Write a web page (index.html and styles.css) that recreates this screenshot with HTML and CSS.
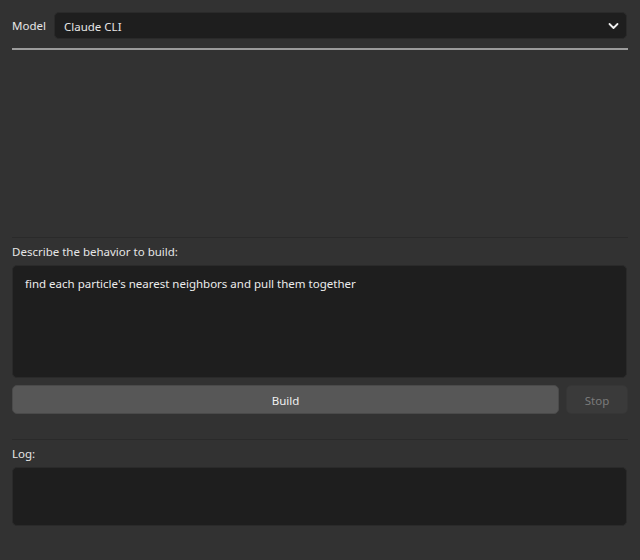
FILE: index.html
```html
<!DOCTYPE html>
<html>
<head>
<meta charset="utf-8">
<link rel="stylesheet" href="styles.css">
</head>
<body>
<div class="app">
  <div class="model-row">
    <span class="label model-label">Model</span>
    <div class="combo">
      <span class="combo-text">Claude CLI</span>
      <svg class="chev" width="11" height="8" viewBox="0 0 11 8"><path d="M1.5 2 L5.5 6 L9.5 2" fill="none" stroke="#f0f0f0" stroke-width="1.8" stroke-linecap="round" stroke-linejoin="round"/></svg>
    </div>
  </div>
  <div class="rule-strong"></div>
  <div class="preview"></div>
  <div class="section">
    <div class="label">Describe the behavior to build:</div>
    <div class="textbox prompt">find each particle's nearest neighbors and pull them together</div>
    <div class="buttons">
      <div class="btn build">Build</div>
      <div class="btn stop">Stop</div>
    </div>
  </div>
  <div class="section log-section">
    <div class="label">Log:</div>
    <div class="textbox log"></div>
  </div>
</div>
</body>
</html>
```
FILE: styles.css
```css
html, body {
  margin: 0;
  padding: 0;
  background: #323232;
  height: 100%;
}
body {
  font-family: "Noto Sans", "Open Sans", sans-serif;
  font-size: 11.5px;
  color: #e6e6e6;
}
.app {
  padding: 12px 12px 0 12px;
  display: flex;
  flex-direction: column;
}
.model-row {
  display: flex;
  align-items: center;
  gap: 8px;
  height: 27px;
}
.label {
  line-height: 16px;
  color: #e6e6e6;
}
.model-label {
  width: 34px;
}
.combo {
  flex: 1;
  height: 27px;
  box-sizing: border-box;
  background: #1e1e1e;
  border: 1px solid #2a2a2a;
  border-radius: 5px;
  display: flex;
  align-items: center;
  justify-content: space-between;
  padding: 1px 7px 0 9px;
  margin-right: 1px;
}
.chev {
  display: block;
}
.rule-strong {
  height: 2px;
  background: #9c9c9c;
  margin-top: 9px;
}
.preview {
  height: 187px;
}
.section {
  border-top: 1px solid #2a2a2a;
  padding-top: 6px;
  display: flex;
  flex-direction: column;
}
.section .label {
  height: 16px;
  margin-bottom: 5px;
}
.textbox {
  background: #1e1e1e;
  border: 1px solid #2a2a2a;
  border-radius: 5px;
  box-sizing: border-box;
  margin-right: 1px;
}
.prompt {
  height: 113px;
  padding: 10px 12px 9px;
  line-height: 16px;
  color: #ececec;
}
.buttons {
  display: flex;
  gap: 7px;
  margin-top: 7px;
  height: 29px;
}
.btn {
  border-radius: 5px;
  box-sizing: border-box;
  display: flex;
  align-items: center;
  justify-content: center;
  padding-top: 1px;
}
.build {
  flex: 1;
  background: #575757;
  border: 1px solid #4a4a4a;
  color: #f0f0f0;
}
.stop {
  width: 62px;
  background: #3a3a3a;
  border: 1px solid #363636;
  color: #7a7a7a;
}
.log-section {
  margin-top: 25px;
}
.log {
  height: 59px;
}
```
